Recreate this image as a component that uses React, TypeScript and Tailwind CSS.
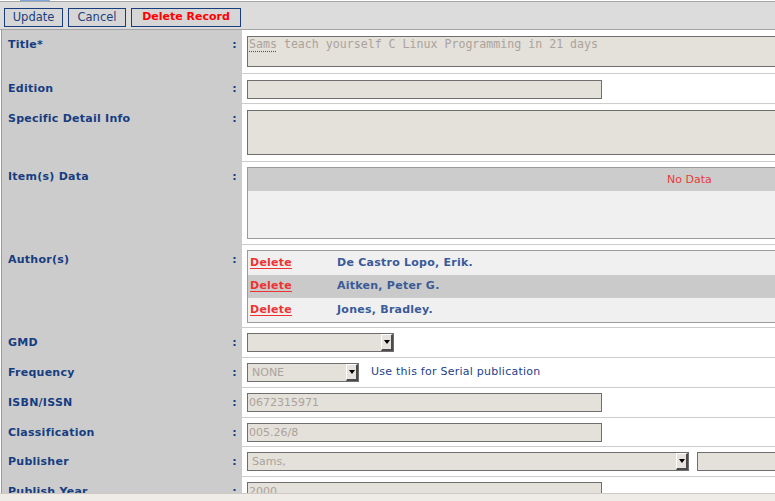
const labelCls =
  "text-[11px] leading-[14px] font-bold tracking-[0.25px] text-[#173d80]";

function Arrow() {
  return (
    <span className="flex h-full w-[12px] shrink-0 items-center justify-center border-t border-l border-b-2 border-r-2 border-t-white border-l-white border-b-[#4a4a4a] border-r-[#4a4a4a] bg-[#e6e3de]">
      <svg width="6" height="4" viewBox="0 0 6 4">
        <path d="M0 0H6L3 4Z" fill="#000" />
      </svg>
    </span>
  );
}

function Select({ width, value }: { width: string; value?: string }) {
  return (
    <div
      className={`flex h-[19px] items-stretch border border-[#6f6f6f] bg-[#e4e0da] ${width}`}
    >
      <span className="flex-1 truncate pl-[4px] text-[11px] leading-[17px] text-[#aba39b]">
        {value}
      </span>
      <Arrow />
    </div>
  );
}

function Input({ width, value }: { width: string; value?: string }) {
  return (
    <div
      className={`h-[19px] border border-[#6f6f6f] bg-[#e4e0da] pl-[1px] text-[11px] leading-[17px] text-[#aba39b] ${width}`}
    >
      {value}
    </div>
  );
}

function Row({
  label,
  height,
  children,
  pt = "pt-[6px]",
}: {
  label: string;
  height: string;
  children?: React.ReactNode;
  pt?: string;
}) {
  return (
    <div className={`flex shrink-0 ${height}`}>
      <div className="flex w-[241px] shrink-0 justify-between border-l border-[#9a9a9a] bg-[#cccccc] pl-[6px] pr-[5px] pt-[8px]">
        <span className={labelCls}>{label}</span>
        <span className={labelCls}>:</span>
      </div>
      <div className={`min-w-0 flex-1 overflow-hidden border-b border-[#cccccc] pl-[5px] ${pt}`}>
        {children}
      </div>
    </div>
  );
}

const authors = ["De Castro Lopo, Erik.", "Aitken, Peter G.", "Jones, Bradley."];

export default function App() {
  return (
    <div className="flex h-[501px] w-[775px] flex-col overflow-hidden bg-white font-['DejaVu_Sans',Verdana,sans-serif]">
      <div className="flex h-px shrink-0">
        <span className="ml-[20px] w-[30px] bg-[#7ea6df]" />
      </div>

      <div className="flex h-[29px] shrink-0 items-start gap-[5px] border-y border-[#a5a5a5] bg-[#dcdcdc] pl-[4px] pt-[6px]">
        <button className="h-[19px] w-[59px] border border-[#173d7c] bg-[#d6d6d6] text-[11.5px] text-[#1d3f7c]">
          Update
        </button>
        <button className="h-[19px] w-[58px] border border-[#173d7c] bg-[#d6d6d6] text-[11.5px] text-[#1d3f7c]">
          Cancel
        </button>
        <button className="h-[19px] w-[110px] border border-[#173d7c] bg-[#d6d6d6] text-[11px] font-bold text-[#ff0000]">
          Delete Record
        </button>
      </div>

      <div className="flex min-h-0 flex-1 flex-col overflow-hidden pl-px">
        <Row label="Title*" height="h-[44px]">
          <div className="h-[31px] w-[560px] border border-[#6f6f6f] bg-[#e4e0da] pl-[1px] font-['DejaVu_Sans_Mono',monospace] text-[11.6px] leading-[15px] text-[#aba39b]">
            <span className="underline decoration-[#e02020] decoration-dotted underline-offset-[3px]">
              Sams
            </span>{" "}
            teach yourself C Linux Programming in 21 days
          </div>
        </Row>

        <Row label="Edition" height="h-[30px]">
          <Input width="w-[355px]" />
        </Row>

        <Row label="Specific Detail Info" height="h-[58px]">
          <div className="h-[45px] w-[560px] border border-[#6f6f6f] bg-[#e4e0da]" />
        </Row>

        <Row label="Item(s) Data" height="h-[83px]" pt="pt-[5px]">
          <div className="flex h-[72px] w-[560px] flex-col border border-[#9a9a9a] bg-[#f0f0f0]">
            <div className="h-[23px] bg-[#cccccc] pl-[419px] text-[11px] leading-[23px] text-[#e83a3a]">
              No Data
            </div>
          </div>
        </Row>

        <Row label="Author(s)" height="h-[83px]" pt="pt-[5px]">
          <div className="flex h-[73px] w-[560px] flex-col border border-[#9a9a9a]">
            {authors.map((name, i) => (
              <div
                key={name}
                className={`flex h-[24px] items-center pl-[2px] text-[11px] font-bold tracking-[0.25px] ${
                  i === 1 ? "bg-[#cacaca]" : "bg-[#f0f0f0]"
                }`}
              >
                <span className="w-[87px] text-[#ee3333] underline underline-offset-2">
                  Delete
                </span>
                <span className="text-[#3a5a98]">{name}</span>
              </div>
            ))}
          </div>
        </Row>

        <Row label="GMD" height="h-[30px]" pt="pt-[5px]">
          <Select width="w-[147px]" />
        </Row>

        <Row label="Frequency" height="h-[30px]" pt="pt-[5px]">
          <div className="flex items-center gap-[12px]">
            <Select width="w-[112px]" value="NONE" />
            <span className="text-[11px] tracking-[0.25px] text-[#1d3f88]">
              Use this for Serial publication
            </span>
          </div>
        </Row>

        <Row label="ISBN/ISSN" height="h-[30px]" pt="pt-[5px]">
          <Input width="w-[355px]" value="0672315971" />
        </Row>

        <Row label="Classification" height="h-[29px]" pt="pt-[5px]">
          <Input width="w-[355px]" value="005.26/8" />
        </Row>

        <Row label="Publisher" height="h-[30px]" pt="pt-[5px]">
          <div className="flex items-center gap-[8px]">
            <Select width="w-[442px] shrink-0" value="Sams," />
            <Input width="w-[100px] shrink-0" />
          </div>
        </Row>

        <Row label="Publish Year" height="h-[30px]" pt="pt-[5px]">
          <Input width="w-[355px]" value="2000" />
        </Row>
      </div>

      <div className="h-[8px] shrink-0 border-t border-[#cfcac4] bg-[#efebe6]" />
    </div>
  );
}
